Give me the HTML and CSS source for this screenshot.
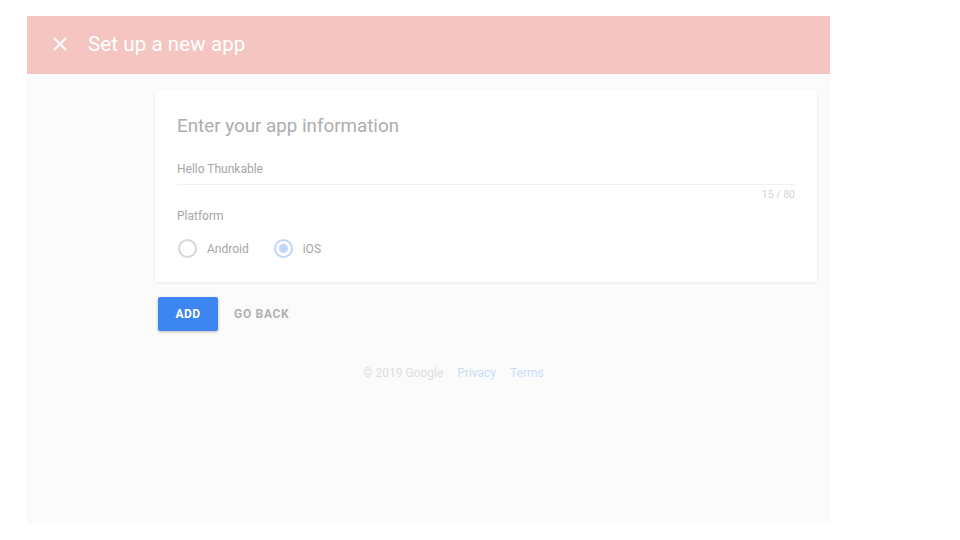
FILE: index.html
```html
<!DOCTYPE html>
<html>
<head>
<meta charset="utf-8">
<link rel="stylesheet" href="styles.css">
</head>
<body>
<div class="frame">
  <header class="topbar">
    <svg class="close" width="16" height="16" viewBox="0 0 16 16"><path d="M2 2L14 14M14 2L2 14" stroke="#fff" stroke-width="1.8" fill="none"/></svg>
    <span class="title">Set up a new app</span>
  </header>
  <main class="content">
    <section class="card">
      <h1 class="card-title">Enter your app information</h1>
      <div class="field">
        <div class="field-value">Hello Thunkable</div>
        <div class="counter">15 / 80</div>
      </div>
      <div class="label">Platform</div>
      <div class="radios">
        <label class="radio"><span class="circle"></span><span>Android</span></label>
        <label class="radio checked"><span class="circle"><span class="dot"></span></span><span>iOS</span></label>
      </div>
    </section>
    <div class="actions">
      <button class="btn-primary">ADD</button>
      <button class="btn-text">GO BACK</button>
    </div>
    <footer class="footer">
      <span class="copy">© 2019 Google</span>
      <a class="link">Privacy</a>
      <a class="link">Terms</a>
    </footer>
  </main>
</div>
</body>
</html>
```
FILE: styles.css
```css
* { box-sizing: border-box; }
html, body { margin: 0; padding: 0; background: #fff; }
body { font-family: Roboto, "Liberation Sans", sans-serif; }
.frame {
  margin: 16px 0 0 27px;
  width: 803px;
  height: 507px;
  background: #fbfbfb;
  display: flex;
  flex-direction: column;
}
.topbar {
  height: 58px;
  background: #f5c6c1;
  display: flex;
  align-items: center;
  padding-left: 25px;
  padding-bottom: 3px;
  flex-shrink: 0;
}
.close { margin-right: 20px; }
.title { color: #fff; font-size: 20.5px; letter-spacing: 0.1px; }
.content { padding-left: 128px; padding-top: 16px; }
.card {
  width: 662px;
  height: 192px;
  background: #fff;
  box-shadow: 0 1px 3px rgba(0,0,0,0.08);
  padding: 25px 22px 0 22px;
}
.card-title {
  margin: 0;
  font-weight: 400;
  font-size: 18.8px;
  color: #adadad;
  line-height: 22px;
}
.field { margin-top: 25px; width: 618px; }
.field-value {
  font-size: 12px;
  color: #a6a6a6;
  line-height: 14px;
  padding-bottom: 8px;
  border-bottom: 1px solid #f0f0f0;
}
.counter {
  text-align: right;
  font-size: 10.5px;
  color: #d4d4d4;
  margin-top: 4px;
  line-height: 12px;
}
.label { margin-top: 8px; font-size: 12px; color: #a6a6a6; line-height: 14px; }
.radios { display: flex; margin-top: 16px; gap: 24px; }
.radio { display: flex; align-items: center; font-size: 12px; color: #a6a6a6; }
.circle {
  width: 19px; height: 19px; border-radius: 50%;
  border: 2px solid #d6d6d6;
  margin-left: 1px;
  margin-right: 10px;
  display: flex; align-items: center; justify-content: center;
}
.checked .circle { border-color: #c2d6f8; }
.dot { width: 9px; height: 9px; border-radius: 50%; background: #c2d6f8; }
.actions { display: flex; align-items: center; margin-top: 15px; margin-left: 3px; }
.btn-primary {
  width: 60px; height: 34px;
  background: #3d85f0;
  color: #fff;
  border: 0;
  border-radius: 2px;
  font-family: inherit;
  font-weight: 700;
  font-size: 12px;
  letter-spacing: 0.4px;
  box-shadow: 0 1px 3px rgba(0,0,0,0.25);
}
.btn-text {
  margin-left: 10px;
  background: none; border: 0;
  color: #b0b0b0;
  font-family: inherit;
  font-weight: 700;
  font-size: 12px;
  letter-spacing: 0.7px;
  padding: 0 6px;
}
.footer {
  margin-top: 35px;
  margin-left: 208px;
  font-size: 12px;
  display: flex;
  gap: 14px;
}
.copy { color: #dddddd; }
.link { color: #cbdcf9; }
```
